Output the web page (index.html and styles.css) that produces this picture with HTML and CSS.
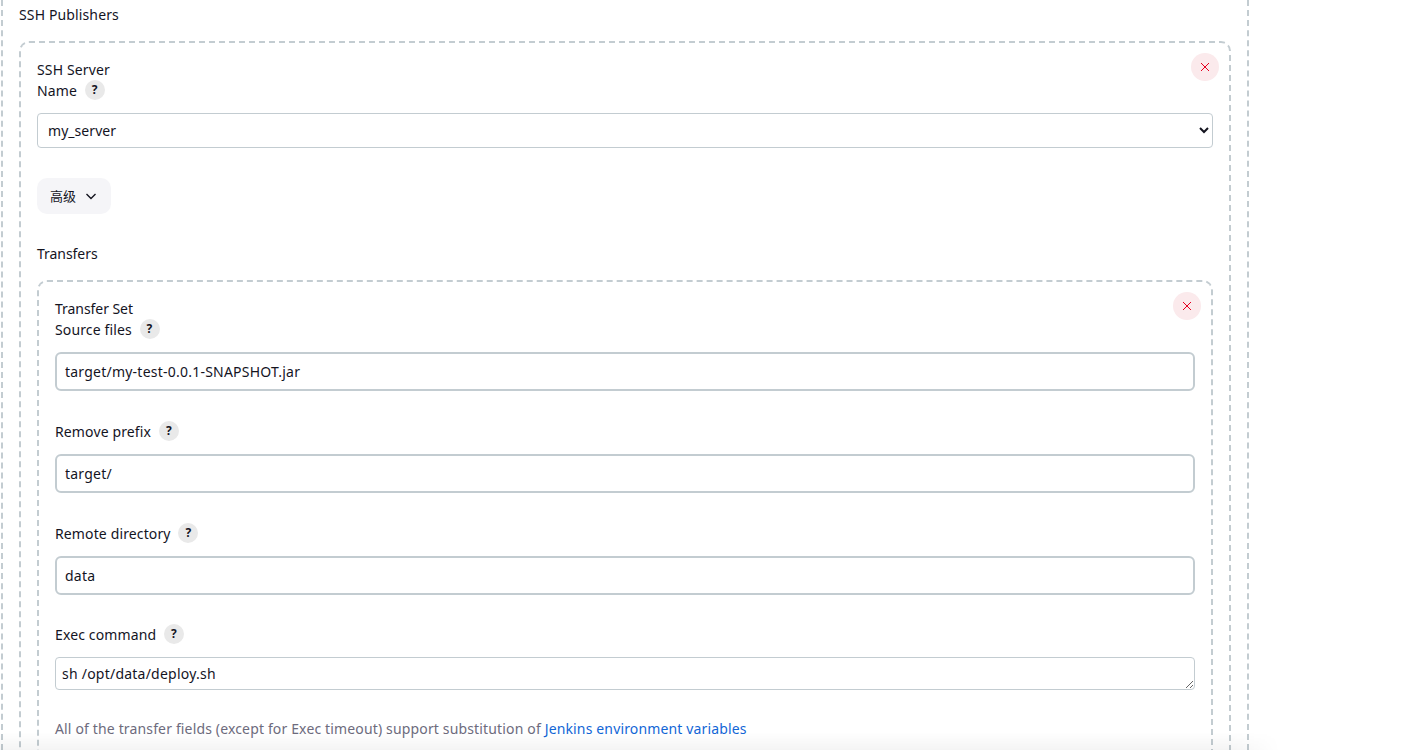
FILE: index.html
```html
<!DOCTYPE html>
<html lang="zh">
  <head>
    <meta charset="UTF-8" />
    <meta name="viewport" content="width=device-width, initial-scale=1.0" />
    <title>SSH Publishers</title>
    <link rel="stylesheet" href="styles.css">
  </head>
  <body>
    <main class="section">
      <div class="label">SSH Publishers</div>

      <div class="repeat server">
        <button type="button" class="close" aria-label="delete">
          <svg viewBox="0 0 10 10" width="10" height="10"><path d="M1 1l8 8M9 1l-8 8" /></svg>
        </button>
        <div class="label">SSH Server</div>
        <div class="label">Name <span class="help">?</span></div>
        <select class="select">
          <option>my_server</option>
        </select>

        <button type="button" class="advanced">
          高级
          <svg viewBox="0 0 12 12" width="12" height="12"><path d="M1.5 4l4.5 4.5L10.500 4" /></svg>
        </button>

        <div class="label transfers tight">Transfers</div>

        <div class="repeat">
          <button type="button" class="close" aria-label="delete">
            <svg viewBox="0 0 10 10" width="10" height="10"><path d="M1 1l8 8M9 1l-8 8" /></svg>
          </button>
          <div class="label tight">Transfer Set</div>
          <div class="label">Source files <span class="help">?</span></div>
          <input class="text" type="text" value="target/my-test-0.0.1-SNAPSHOT.jar" />

          <div class="label field">Remove prefix <span class="help">?</span></div>
          <input class="text" type="text" value="target/" />

          <div class="label field">Remote directory <span class="help">?</span></div>
          <input class="text" type="text" value="data" />

          <div class="label field last">Exec command <span class="help">?</span></div>
          <textarea class="area" rows="1">sh /opt/data/deploy.sh</textarea>

          <p class="note">All of the transfer fields (except for Exec timeout) support substitution of <a href="#">Jenkins environment variables</a></p>
        </div>
      </div>
    </main>
    <div class="fade"></div>
  </body>
</html>
```

FILE: styles.css
```css
* {
  margin: 0;
  padding: 0;
  box-sizing: border-box;
}

html,
body {
  height: 750px;
  overflow: hidden;
}

body {
  background-color: white;
  color: #14141f;
  font-family: "Noto Sans", "Noto Sans CJK SC", sans-serif;
  font-size: 14px;
  line-height: 21px;
  letter-spacing: 0.13px;
}

/* the page is scrolled: the boxes carry on below the window */
.section {
  width: 1248px;
  height: 750px;
  margin-left: 1px;
  padding: 4px 16px 0;
  overflow: hidden;
  border-left: 2px dashed #c3ccd1;
  border-right: 2px dashed #c3ccd1;
}

.label {
  height: 21px;
}

.tight {
  letter-spacing: -0.05px;
}

.repeat {
  position: relative;
  height: 520px;
  padding: 16px 16px 0;
  border: 2px dashed #c3ccd1;
  border-radius: 10px;
}

.server {
  height: 760px;
  margin-top: 16px;
}

.close {
  position: absolute;
  top: 10px;
  right: 10px;
  width: 28px;
  height: 28px;
  display: flex;
  align-items: center;
  justify-content: center;
  border: none;
  border-radius: 50%;
  background-color: #fbeaec;
}

.close path {
  fill: none;
  stroke: #e6001f;
  stroke-width: 1;
}

.help {
  display: inline-block;
  width: 20px;
  height: 20px;
  margin-left: 4px;
  border-radius: 50%;
  background-color: #e9e9e9;
  font-size: 12px;
  font-weight: 700;
  line-height: 20px;
  text-align: center;
  vertical-align: top;
}

.select {
  display: block;
  width: 100%;
  height: 35px;
  margin-top: 12px;
  padding-left: 6px;
  border: 1px solid #c3ccd1;
  border-radius: 4px;
  background-color: white;
  color: #14141f;
  font: inherit;
  letter-spacing: 0.05px;
}

.advanced {
  display: flex;
  align-items: center;
  gap: 9px;
  height: 36px;
  margin-top: 30px;
  padding: 0 14px 0 13px;
  border: none;
  border-radius: 10px;
  background-color: #f5f5f8;
  color: #14141f;
  font: inherit;
  font-size: 13px;
}

.advanced path {
  fill: none;
  stroke: #14141f;
  stroke-width: 1.4;
}

.transfers {
  margin-top: 29px;
  margin-bottom: 16px;
}

.text {
  display: block;
  width: 100%;
  height: 39px;
  margin-top: 12px;
  padding: 0 8px;
  border: 2px solid #c3ccd1;
  border-radius: 6px;
  color: #14141f;
  font: inherit;
  letter-spacing: 0.23px;
}

.field {
  margin-top: 30px;
}

.field.last {
  margin-top: 29px;
}

.area {
  display: block;
  width: 100%;
  height: 33px;
  margin-top: 12px;
  padding: 5px 6px;
  border: 1px solid #c3ccd1;
  border-radius: 4px;
  color: #14141f;
  font: inherit;
  letter-spacing: 0.23px;
}

.note {
  margin-top: 28px;
  color: #6d6b7d;
  letter-spacing: 0.15px;
}

.note a {
  color: #1266d6;
  text-decoration: none;
}

/* shadow of the sticky bar that sits under the window edge */
.fade {
  position: absolute;
  left: 0;
  top: 732px;
  width: 1280px;
  height: 18px;
  background: linear-gradient(transparent, rgba(0, 0, 0, 0.045));
  -webkit-mask-image: linear-gradient(to right, black 96%, transparent);
  mask-image: linear-gradient(to right, black 96%, transparent);
  pointer-events: none;
}
```
